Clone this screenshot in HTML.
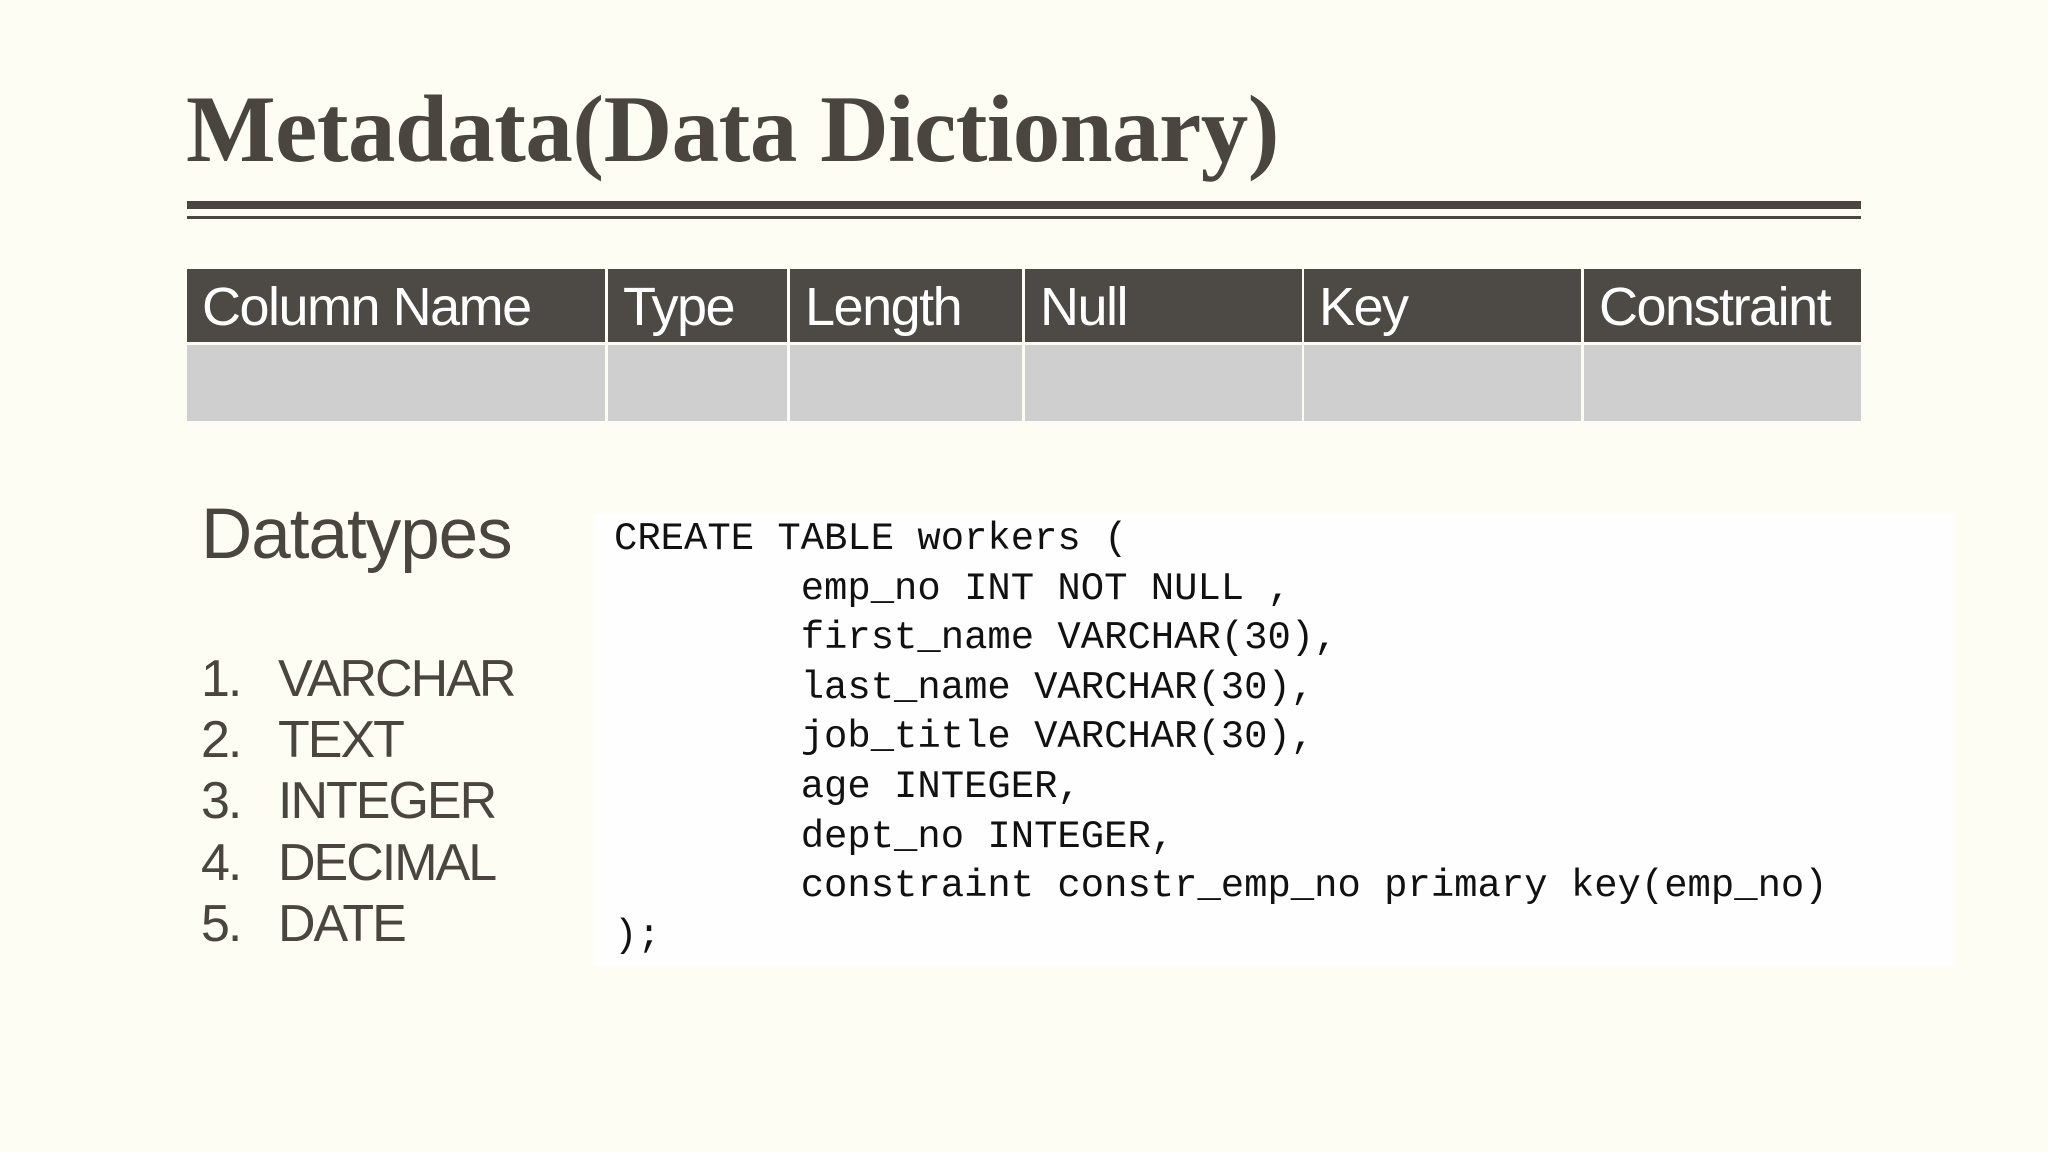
<!DOCTYPE html>
<html><head><meta charset="utf-8"><style>
html,body{margin:0;padding:0}
body{width:2048px;height:1152px;background:#fdfdf4;position:relative;overflow:hidden;font-family:"Liberation Sans",sans-serif}
.title{position:absolute;left:186px;top:82px;font-family:"Liberation Serif",serif;font-weight:bold;font-size:95px;color:#4a463f;white-space:nowrap;letter-spacing:-0.5px;line-height:1}
.l1{position:absolute;left:187px;top:201px;width:1674px;height:8px;background:#4a463f}
.l2{position:absolute;left:187px;top:216px;width:1674px;height:3px;background:#4a463f}
.cell{position:absolute;box-sizing:border-box}
.h{top:269px;height:73px;background:#4d4944;color:#fff;font-size:54px;line-height:76px;padding-left:15px;letter-spacing:-1.5px}
.b{top:345px;height:76px;background:#d0cfcf}
.dt{position:absolute;left:201px;top:494px;font-size:71px;color:#4a463f;letter-spacing:-1px}
.li{position:absolute;left:201px;font-size:52px;color:#4a463f;line-height:1;letter-spacing:-2px}
.li span{position:absolute;left:77px}
.code{position:absolute;left:594px;top:513px;width:1359px;height:454px;background:#fefefe}
pre{position:absolute;left:614px;top:515px;margin:0;font-family:"Liberation Mono",monospace;font-size:38.9px;line-height:49.6px;color:#111}
</style></head><body>
<div class="title">Metadata(Data Dictionary)</div>
<div class="l1"></div><div class="l2"></div>
<div class="cell h" style="left:187px;width:418px">Column Name</div>
<div class="cell h" style="left:608px;width:179px">Type</div>
<div class="cell h" style="left:790px;width:232px">Length</div>
<div class="cell h" style="left:1025px;width:277px">Null</div>
<div class="cell h" style="left:1304px;width:277px">Key</div>
<div class="cell h" style="left:1584px;width:277px">Constraint</div>
<div class="cell b" style="left:187px;width:418px"></div>
<div class="cell b" style="left:608px;width:179px"></div>
<div class="cell b" style="left:790px;width:232px"></div>
<div class="cell b" style="left:1025px;width:277px"></div>
<div class="cell b" style="left:1304px;width:277px"></div>
<div class="cell b" style="left:1584px;width:277px"></div>
<div class="dt">Datatypes</div>
<div class="li" style="top:653px">1.<span>VARCHAR</span></div>
<div class="li" style="top:714px">2.<span>TEXT</span></div>
<div class="li" style="top:775px">3.<span>INTEGER</span></div>
<div class="li" style="top:837px">4.<span>DECIMAL</span></div>
<div class="li" style="top:898px">5.<span>DATE</span></div>
<div class="code"></div>
<pre>CREATE TABLE workers (
        emp_no INT NOT NULL ,
        first_name VARCHAR(30),
        last_name VARCHAR(30),
        job_title VARCHAR(30),
        age INTEGER,
        dept_no INTEGER,
        constraint constr_emp_no primary key(emp_no)
);</pre>
</body></html>
